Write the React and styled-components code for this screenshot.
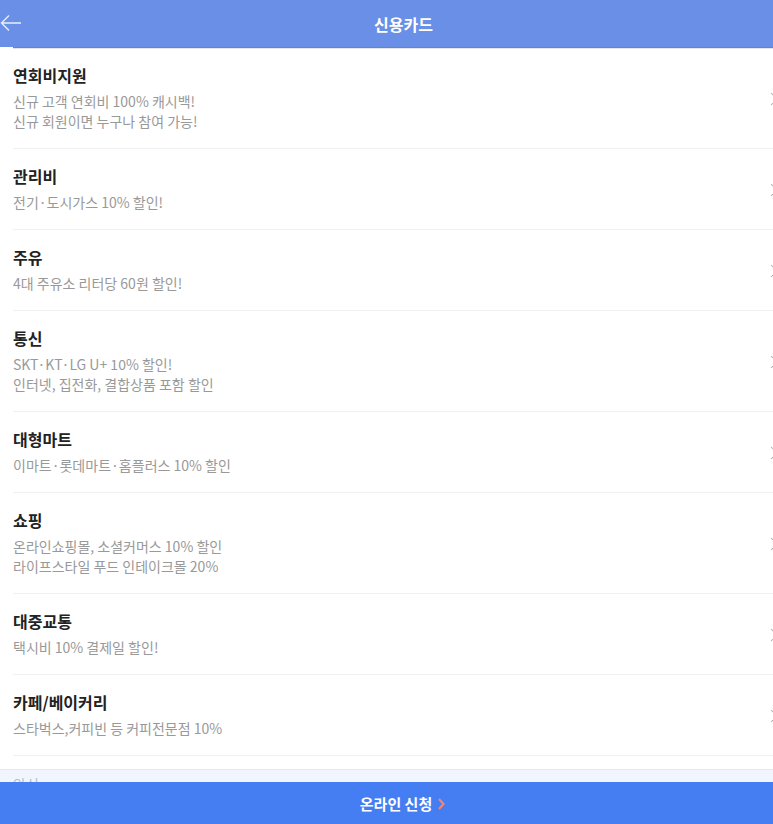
import React from 'react';
import styled, { createGlobalStyle } from 'styled-components';

const GlobalStyle = createGlobalStyle`
  html, body {
    margin: 0;
    padding: 0;
    background: #fff;
    font-family: "Noto Sans CJK KR", "Noto Sans", sans-serif;
  }
`;

const Page = styled.div`
  display: flex;
  flex-direction: column;
  height: 824px;
  overflow: hidden;
`;

const Header = styled.header`
  position: relative;
  display: flex;
  align-items: center;
  justify-content: center;
  flex: none;
  height: 47px;
  padding-left: 34px;
  background: #6990e6;
  box-shadow: 13px 1px 0 #7b8395, 13px 2px 0 #e4e4e4;
  z-index: 1;
`;

const BackButton = styled.button`
  position: absolute;
  left: 0;
  top: 13px;
  padding: 0;
  border: 0;
  background: none;
  line-height: 0;
`;

const Title = styled.h1`
  margin: 0;
  color: #fff;
  font-size: 16px;
  font-weight: 700;
  line-height: 22px;
`;

const Scroll = styled.main`
  flex: 1;
  overflow: hidden;
  padding-top: 1px;
`;

const List = styled.ul`
  list-style: none;
  margin: 0;
  padding: 0 0 0 13px;
`;

const Item = styled.li`
  position: relative;
  padding: 16px 0 17px;
  border-bottom: 1px solid #f1f1f1;
`;

const ItemTitle = styled.div`
  color: #222;
  font-size: 16px;
  font-weight: 700;
  line-height: 22px;
  margin-bottom: 5px;
`;

const ItemDesc = styled.div`
  color: #999;
  font-size: 14px;
  line-height: 20px;
`;

const Chevron = styled.span`
  position: absolute;
  left: 754px;
  top: 50%;
  width: 8px;
  height: 8px;
  margin-top: 1px;
  border-top: 1.5px solid #a6a6a6;
  border-right: 1.5px solid #a6a6a6;
  transform: translateY(-50%) rotate(45deg);
`;

const Notice = styled.section`
  margin-top: 13px;
  padding: 4px 13px 20px;
  background: #f1f5fd;
  border-top: 1px solid #e2e8f4;
  color: #bbb;
  font-size: 14px;
  line-height: 20px;
`;

const ApplyBar = styled.button`
  flex: none;
  display: flex;
  align-items: center;
  justify-content: center;
  gap: 6px;
  height: 42px;
  width: 100%;
  padding: 0 0 0 32px;
  border: 0;
  background: #447ef2;
  color: #fff;
  font-family: inherit;
  font-size: 15px;
  font-weight: 700;
`;

const Arrow = styled.svg`
  display: block;
  margin-top: 1px;
`;

const items = [
  { title: '연회비지원', desc: ['신규 고객 연회비 100% 캐시백!', '신규 회원이면 누구나 참여 가능!'] },
  { title: '관리비', desc: ['전기·도시가스 10% 할인!'] },
  { title: '주유', desc: ['4대 주유소 리터당 60원 할인!'] },
  { title: '통신', desc: ['SKT·KT·LG U+ 10% 할인!', '인터넷, 집전화, 결합상품 포함 할인'] },
  { title: '대형마트', desc: ['이마트·롯데마트·홈플러스 10% 할인'] },
  { title: '쇼핑', desc: ['온라인쇼핑몰, 소셜커머스 10% 할인', '라이프스타일 푸드 인테이크몰 20%'] },
  { title: '대중교통', desc: ['택시비 10% 결제일 할인!'] },
  { title: '카페/베이커리', desc: ['스타벅스,커피빈 등 커피전문점 10%'] },
];

export default function App() {
  return (
    <Page>
      <GlobalStyle />
      <Header>
        <BackButton aria-label="뒤로">
          <svg width="22" height="20" viewBox="0 0 22 20" fill="none" stroke="#e8eefc" strokeWidth="1.4">
            <path d="M21 10H1.5M9 2.5L1.5 10L9 17.5" />
          </svg>
        </BackButton>
        <Title>신용카드</Title>
      </Header>
      <Scroll>
        <List>
          {items.map((item) => (
            <Item key={item.title}>
              <ItemTitle>{item.title}</ItemTitle>
              {item.desc.map((line) => (
                <ItemDesc key={line}>{line}</ItemDesc>
              ))}
              <Chevron />
            </Item>
          ))}
        </List>
        <Notice>안심</Notice>
      </Scroll>
      <ApplyBar>
        온라인 신청
        <Arrow width="7" height="12" viewBox="0 0 7 12" fill="none" stroke="#f5846f" strokeWidth="2.2">
          <path d="M1 1l4.5 5L1 11" />
        </Arrow>
      </ApplyBar>
    </Page>
  );
}
